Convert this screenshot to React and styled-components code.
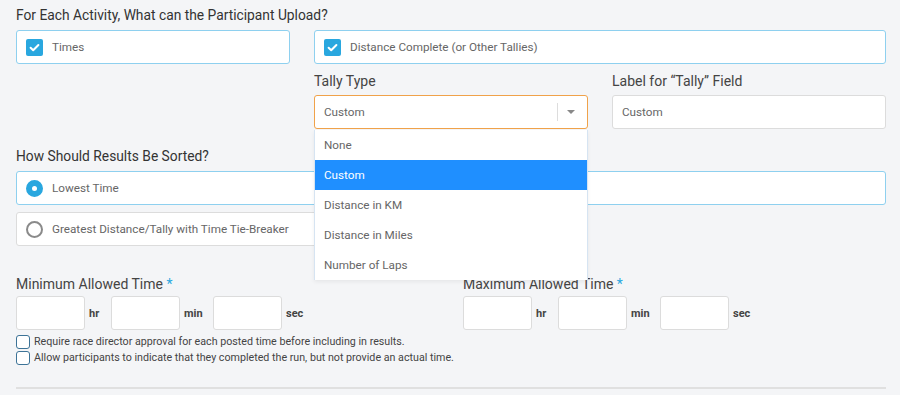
import React, { useState } from "react";
import styled, { createGlobalStyle } from "styled-components";

const GlobalStyle = createGlobalStyle`
  body {
    margin: 0;
    background: #f4f5f7;
    font-family: Roboto, "Liberation Sans", sans-serif;
  }
`;

const tallyOptions = ["None", "Custom", "Distance in KM", "Distance in Miles", "Number of Laps"];

function CheckIcon() {
  return (
    <svg width="17" height="17" viewBox="0 0 17 17">
      <rect width="17" height="17" rx="2" fill="#29a7df" />
      <path d="M4.6 8.8l2.6 2.5 5.2-5.3" stroke="#fff" strokeWidth="2" fill="none" strokeLinecap="round" strokeLinejoin="round" />
    </svg>
  );
}

function TimeInputs() {
  return (
    <TimeRow>
      <TimeInput /><Unit>hr</Unit>
      <TimeInput /><Unit wide>min</Unit>
      <TimeInput /><Unit>sec</Unit>
    </TimeRow>
  );
}

function App() {
  const [sort, setSort] = useState("lowest");
  const [tally] = useState("Custom");

  return (
    <Page>
      <GlobalStyle />
      <SectionTitle first>For Each Activity, What can the Participant Upload?</SectionTitle>
      <Grid3>
        <OptionCard active>
          <CheckIcon />
          <span>Times</span>
        </OptionCard>
        <OptionCard active span={2}>
          <CheckIcon />
          <span>Distance Complete (or Other Tallies)</span>
        </OptionCard>
        <div />
        <Field>
          <FieldLabel>Tally Type</FieldLabel>
          <SelectWrap>
            <SelectBox>
              <span>{tally}</span>
              <Sep />
              <Caret />
            </SelectBox>
            <Menu>
              {tallyOptions.map((o) => (
                <MenuItem key={o} selected={o === tally}>{o}</MenuItem>
              ))}
            </Menu>
          </SelectWrap>
        </Field>
        <Field>
          <FieldLabel>Label for “Tally” Field</FieldLabel>
          <TextInput defaultValue="Custom" />
        </Field>
      </Grid3>

      <SectionTitle>How Should Results Be Sorted?</SectionTitle>
      <OptionCard active={sort === "lowest"} onClick={() => setSort("lowest")}>
        <Radio checked={sort === "lowest"} />
        <span>Lowest Time</span>
      </OptionCard>
      <SortRow>
        <OptionCard active={sort === "greatest"} onClick={() => setSort("greatest")}>
          <Radio checked={sort === "greatest"} />
          <span>Greatest Distance/Tally with Time Tie-Breaker</span>
        </OptionCard>
      </SortRow>

      <Grid2>
        <TimeGroup>
          <FieldLabel tight>Minimum Allowed Time <Req>*</Req></FieldLabel>
          <TimeInputs />
          <SmallCheck>
            <Box />
            Require race director approval for each posted time before including in results.
          </SmallCheck>
          <SmallCheck>
            <Box />
            Allow participants to indicate that they completed the run, but not provide an actual time.
          </SmallCheck>
        </TimeGroup>
        <TimeGroup>
          <FieldLabel tight>Maximum Allowed Time <Req>*</Req></FieldLabel>
          <TimeInputs />
        </TimeGroup>
      </Grid2>
      <Divider />
    </Page>
  );
}

const Page = styled.div`
  width: 870px;
  padding: 0 14px 0 16px;
  color: #333;
`;

const SectionTitle = styled.div`
  font-size: 13.8px;
  line-height: 20px;
  color: #333;
  margin: ${(p) => (p.first ? "5px 0 5px" : "17px 0 5px")};
`;

const Grid3 = styled.div`
  display: grid;
  grid-template-columns: repeat(3, minmax(0, 1fr));
  column-gap: 24px;
  row-gap: 8px;
`;

const Grid2 = styled.div`
  display: grid;
  grid-template-columns: repeat(2, minmax(0, 1fr));
  column-gap: 24px;
  margin-top: 29px;
`;

const OptionCard = styled.div`
  grid-column: span ${(p) => p.span || 1};
  box-sizing: border-box;
  height: 34px;
  display: flex;
  align-items: center;
  gap: 9px;
  padding: 0 9px;
  background: #fff;
  border: 1px solid ${(p) => (p.active ? "#8ed0ef" : "#dcdcdc")};
  border-radius: 3px;
  font-size: 11.7px;
  color: #666;
  cursor: pointer;
  svg {
    flex-shrink: 0;
  }
`;

const SortRow = styled.div`
  margin-top: 7px;
  width: 572px;
`;

const Radio = styled.span`
  box-sizing: border-box;
  width: 17px;
  height: 17px;
  border-radius: 50%;
  flex-shrink: 0;
  background: ${(p) => (p.checked ? "#29a7df" : "#fff")};
  border: 2px solid ${(p) => (p.checked ? "#29a7df" : "#8a8a8a")};
  display: flex;
  align-items: center;
  justify-content: center;
  &::after {
    content: "";
    width: 5px;
    height: 5px;
    border-radius: 50%;
    background: #fff;
    display: ${(p) => (p.checked ? "block" : "none")};
  }
`;

const Field = styled.div`
  display: flex;
  flex-direction: column;
`;

const FieldLabel = styled.div`
  font-size: 14px;
  line-height: 18px;
  color: #444;
  margin-bottom: ${(p) => (p.tight ? "3px" : "5px")};
  white-space: nowrap;
`;

const Req = styled.span`
  color: #29a7df;
`;

const SelectWrap = styled.div`
  position: relative;
`;

const SelectBox = styled.div`
  box-sizing: border-box;
  height: 34px;
  display: flex;
  align-items: center;
  padding: 0 12px 0 9px;
  background: #fff;
  border: 1px solid #f0a24a;
  border-radius: 3px;
  font-size: 11.7px;
  color: #666;
  span {
    flex: 1;
  }
`;

const Sep = styled.div`
  width: 1px;
  height: 18px;
  background: #ddd;
  margin-right: 9px;
`;

const Caret = styled.div`
  width: 0;
  height: 0;
  border-left: 4px solid transparent;
  border-right: 4px solid transparent;
  border-top: 4px solid #888;
`;

const Menu = styled.div`
  position: absolute;
  top: 35px;
  left: 0;
  right: 0;
  background: #fff;
  border-left: 1px solid #d6e4f2;
  border-right: 1px solid #d6e4f2;
  box-shadow: 0 2px 4px rgba(0, 0, 0, 0.06);
  z-index: 10;
`;

const MenuItem = styled.div`
  height: 30px;
  line-height: 30px;
  padding: 0 9px;
  font-size: 11.7px;
  color: ${(p) => (p.selected ? "#fff" : "#666")};
  background: ${(p) => (p.selected ? "#1f8fff" : "#fff")};
`;

const TextInput = styled.input`
  box-sizing: border-box;
  height: 34px;
  width: 100%;
  padding: 0 9px;
  border: 1px solid #dcdcdc;
  border-radius: 3px;
  background: #fff;
  font-family: inherit;
  font-size: 11.7px;
  color: #666;
  outline: none;
`;

const TimeGroup = styled.div`
  display: flex;
  flex-direction: column;
  min-width: 0;
`;

const TimeRow = styled.div`
  display: flex;
  align-items: center;
  margin-bottom: 4px;
`;

const TimeInput = styled.input`
  box-sizing: border-box;
  width: 69px;
  height: 34px;
  border: 1px solid #dcdcdc;
  border-radius: 3px;
  background: #fff;
  outline: none;
`;

const Unit = styled.span`
  box-sizing: border-box;
  width: ${(p) => (p.wide ? "33px" : "26px")};
  padding-left: 4px;
  font-size: 11px;
  font-weight: bold;
  color: #444;
`;

const SmallCheck = styled.label`
  display: flex;
  align-items: center;
  gap: 4px;
  font-size: 10.7px;
  line-height: 16px;
  color: #444;
  white-space: nowrap;
`;

const Box = styled.span`
  box-sizing: border-box;
  width: 14px;
  height: 14px;
  border: 1.5px solid #3d7397;
  border-radius: 3px;
  background: #fff;
  flex-shrink: 0;
`;

const Divider = styled.div`
  height: 2px;
  background: #e0e0e0;
  margin-top: 21px;
`;

export default App;
